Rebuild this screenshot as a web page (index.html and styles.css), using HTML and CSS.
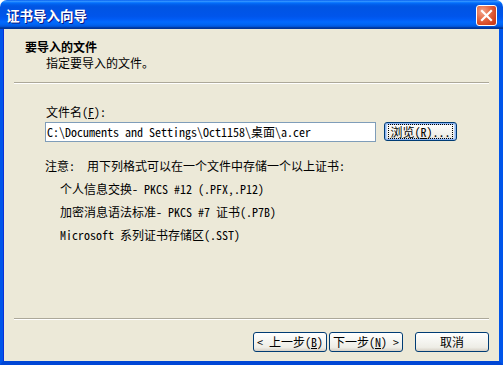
FILE: index.html
```html
<!DOCTYPE html>
<html lang="zh-CN">
<head>
<meta charset="utf-8">
<title>证书导入向导</title>
<link rel="stylesheet" href="styles.css">
</head>
<body>
<div class="window">
  <div class="titlebar">
    <span class="title">证书导入向导</span>
    <span class="close" aria-label="关闭">
      <svg width="21" height="21" viewBox="0 0 21 21"><path d="M6 6 L15 15 M15 6 L6 15" stroke="#fff" stroke-width="2.2" stroke-linecap="square" fill="none"/></svg>
    </span>
  </div>
  <div class="client">
    <div class="header">
      <div class="h-title">要导入的文件</div>
      <div class="h-sub">指定要导入的文件。</div>
    </div>
    <div class="sep"></div>
    <div class="content">
      <div class="label">文件名(<u>F</u>):</div>
      <div class="file-row">
        <div class="input">C:\Documents and Settings\Oct1158\桌面\a.cer</div>
        <div class="btn btn-default"><span class="focus">浏览(<u>R</u>)...</span></div>
      </div>
      <div class="note">注意:&nbsp; 用下列格式可以在一个文件中存储一个以上证书:</div>
      <div class="item">个人信息交换- PKCS #12 (.PFX,.P12)</div>
      <div class="item">加密消息语法标准- PKCS #7 证书(.P7B)</div>
      <div class="item">Microsoft 系列证书存储区(.SST)</div>
    </div>
    <div class="footer">
      <div class="sep"></div>
      <div class="buttons">
        <div class="btn">&lt; 上一步(<u>B</u>)</div>
        <div class="btn">下一步(<u>N</u>) &gt;</div>
        <div class="btn btn-cancel">取消</div>
      </div>
    </div>
  </div>
</div>
</body>
</html>
```
FILE: styles.css
```css
html, body {
  margin: 0;
  padding: 0;
  background: #ffffff;
}
body {
  width: 503px;
  height: 365px;
  overflow: hidden;
  font-family: "Noto Sans Mono CJK SC", "Noto Sans CJK SC", "Liberation Mono", monospace;
  font-size: 12px;
  color: #000;
}
.window {
  width: 503px;
  height: 365px;
  display: flex;
  flex-direction: column;
}
.titlebar {
  height: 29px;
  flex: none;
  border-radius: 7px 7px 0 0;
  background: linear-gradient(to bottom, #0058EE 0%, #3593FF 4%, #288EFF 6%, #127DFF 8%, #036FFC 10%, #0262EE 14%, #0057E5 20%, #0054E3 24%, #0055EB 56%, #005BF5 66%, #026AFE 76%, #0062EF 86%, #0052D6 92%, #0040AB 94%, #003092 100%);
  display: flex;
  align-items: center;
  justify-content: space-between;
  padding: 0 6px 0 6px;
  box-sizing: border-box;
}
.title {
  font-family: "Noto Sans CJK SC", sans-serif;
  font-weight: bold;
  font-size: 13.5px;
  line-height: 14px;
  color: #fff;
  text-shadow: 1px 1px 0 #0a1883;
  padding-top: 1px;
}
.close {
  width: 21px;
  height: 21px;
  box-sizing: border-box;
  border: 1px solid #fff;
  border-radius: 3px;
  background: radial-gradient(circle at 30% 30%, #f4a58a 0%, #e56a45 40%, #d3421f 75%, #c03a1a 100%);
  display: flex;
  align-items: center;
  justify-content: center;
  margin-top: 1px;
}
.close svg {
  display: block;
  margin: -1px;
}
.client {
  flex: 1;
  background: #ECE9D8;
  border-left: 3px solid #0055EA;
  border-right: 4px solid #0055EA;
  border-bottom: 4px solid #0046D5;
  box-shadow: inset 1px 0 0 #0831d9;
  display: flex;
  flex-direction: column;
  line-height: 12px;
}
.header {
  padding: 12px 0 0 22px;
}
.h-title {
  font-weight: bold;
  height: 12px;
}
.h-sub {
  margin-top: 4px;
  padding-left: 21px;
  height: 12px;
}
.sep {
  margin: 13px 10px 0 11px;
  height: 0;
  border-top: 1px solid #ACA899;
  border-bottom: 1px solid #ffffff;
}
.content {
  padding: 22px 0 0 42px;
}
.label {
  padding-left: 1px;
  height: 12px;
}
.file-row {
  margin-top: 4px;
  display: flex;
  align-items: flex-start;
  gap: 8px;
}
.input {
  width: 331px;
  height: 20px;
  box-sizing: border-box;
  border: 1px solid #7F9DB9;
  background: #fff;
  padding: 0 0 0 1px;
  display: flex;
  align-items: center;
  white-space: pre;
}
.btn {
  width: 74px;
  height: 20px;
  box-sizing: border-box;
  border: 1px solid #003C74;
  border-radius: 3px;
  background: linear-gradient(to bottom, #ffffff 0%, #f6f6f2 40%, #eeede6 80%, #d6d0c5 100%);
  display: flex;
  align-items: center;
  justify-content: center;
  white-space: pre;
}
.btn-default {
  width: 73px;
  height: 19px;
  box-shadow: inset 0 0 0 1px #8cb4f2, inset 0 0 0 2px #bcd4f6;
}
.focus {
  border: 1px dotted #000;
  padding: 1px 1px 0 1px;
  line-height: 12px;
}
.note {
  margin-top: 18px;
  height: 23px;
  white-space: pre;
}
.item {
  padding-left: 15px;
  height: 23px;
  white-space: pre;
}
.footer {
  margin-top: auto;
}
.footer .sep {
  margin-top: 0;
}
.buttons {
  display: flex;
  justify-content: flex-end;
  padding: 12px 10px 9px 0;
  gap: 2px;
}
.btn-cancel {
  margin-left: 10px;
}
u {
  text-decoration: underline;
  text-underline-offset: 1px;
}
```
